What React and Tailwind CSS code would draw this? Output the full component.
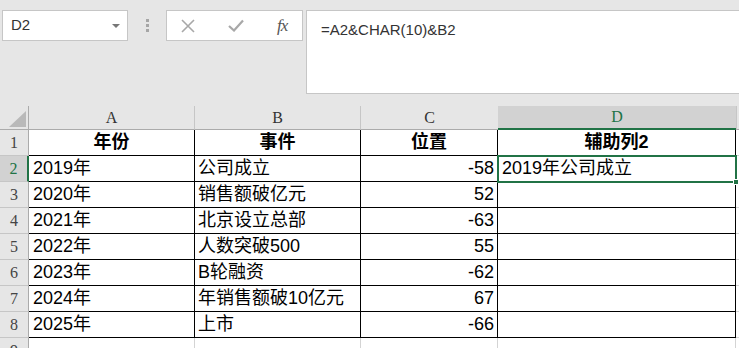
import React from 'react';

const rows = [
  ['2019年', '公司成立', '-58', '2019年公司成立'],
  ['2020年', '销售额破亿元', '52', ''],
  ['2021年', '北京设立总部', '-63', ''],
  ['2022年', '人数突破500', '55', ''],
  ['2023年', 'B轮融资', '-62', ''],
  ['2024年', '年销售额破10亿元', '67', ''],
  ['2025年', '上市', '-66', ''],
];

const cellFont = "font-['Liberation_Sans','Noto_Sans_CJK_SC',sans-serif] text-[18px] text-black";
const headFont = "font-['Liberation_Serif','Noto_Sans_CJK_SC',serif] text-[16px]";

const RowHead = ({ n, active, last }) => (
  <div
    className={`w-[29px] shrink-0 flex items-center justify-center border-b ${headFont} ${
      active
        ? 'bg-[#d2d2d2] text-[#217346] border-r-2 border-r-[#217346] border-b-[#c6c6c6]'
        : 'bg-[#e6e6e6] text-[#444] border-r border-r-[#ababab] border-b-[#c6c6c6]'
    } ${last ? '' : ''}`}
  >
    {n}
  </div>
);

export default function App() {
  return (
    <div className="w-[739px] h-[348px] overflow-hidden bg-[#e6e6e6]">
      {/* formula bar */}
      <div className="flex pt-[10px] h-[96px]">
        <div className="ml-[2px] w-[126px] h-[31px] bg-white border border-[#c6c6c6] flex items-center justify-between pl-[8px] pr-[7px]">
          <span className="font-['Liberation_Sans',sans-serif] text-[15px] text-[#333]">D2</span>
          <svg width="8" height="4" viewBox="0 0 8 4">
            <path d="M0 0H8L4 4Z" fill="#777" />
          </svg>
        </div>
        <div className="w-[38px] h-[31px] flex flex-col items-center justify-center gap-[2px]">
          <div className="w-[3px] h-[3px] bg-[#a6a6a6]" />
          <div className="w-[3px] h-[3px] bg-[#a6a6a6]" />
          <div className="w-[3px] h-[3px] bg-[#a6a6a6]" />
        </div>
        <div className="w-[137px] h-[31px] bg-white border border-[#c6c6c6] flex items-center pl-[14px] gap-[33px]">
          <svg width="14" height="14" viewBox="0 0 14 14">
            <path d="M1 1L13 13M13 1L1 13" stroke="#a8a8a8" strokeWidth="1.6" />
          </svg>
          <svg width="16" height="13" viewBox="0 0 16 13">
            <path d="M1 7L6 11.5L15 1.5" stroke="#a8a8a8" strokeWidth="2.2" fill="none" />
          </svg>
          <span className="font-['Liberation_Serif',serif] italic text-[17px] text-[#555] tracking-[-1px]">fx</span>
        </div>
        <div className="ml-[3px] flex-1 h-[84px] bg-white border border-[#c6c6c6] border-r-0 pl-[14px] pt-[6px]">
          <span className="font-['Liberation_Sans',sans-serif] text-[15px] text-[#333]">=A2&amp;CHAR(10)&amp;B2</span>
        </div>
      </div>

      {/* grid */}
      <div className="relative mt-[10px]">
        <div className={`flex h-[24px] ${headFont} text-[#333]`}>
          <div className="w-[29px] shrink-0 border-r border-[#ababab] border-b border-b-[#ababab] flex items-end justify-end pr-[2px] pb-[2px]">
            <svg width="17" height="16" viewBox="0 0 17 16">
              <path d="M17 0V16H0Z" fill="#b9b9b9" />
            </svg>
          </div>
          <div className="w-[166px] shrink-0 border-r border-[#c6c6c6] border-b border-b-[#ababab] flex items-center justify-center">A</div>
          <div className="w-[166px] shrink-0 border-r border-[#c6c6c6] border-b border-b-[#ababab] flex items-center justify-center">B</div>
          <div className="w-[137px] shrink-0 border-b border-b-[#ababab] flex items-center justify-center">C</div>
          <div className="w-[238px] shrink-0 bg-[#d2d2d2] text-[#217346] border-b-2 border-[#217346] flex items-center justify-center">D</div>
          <div className="flex-1 border-l border-[#c6c6c6] border-b border-b-[#ababab]" />
        </div>

        {/* header row 1 */}
        <div className="flex h-[26px] bg-white">
          <RowHead n="1" />
          <div className={`w-[166px] shrink-0 border-r border-b border-black flex items-center justify-center font-bold ${cellFont}`}>年份</div>
          <div className={`w-[166px] shrink-0 border-r border-b border-black flex items-center justify-center font-bold ${cellFont}`}>事件</div>
          <div className={`w-[137px] shrink-0 border-r border-b border-black flex items-center justify-center font-bold ${cellFont}`}>位置</div>
          <div className={`w-[238px] shrink-0 border-r border-b border-black flex items-center justify-center font-bold ${cellFont}`}>辅助列2</div>
          <div className="flex-1 border-b border-[#d4d4d4]" />
        </div>

        {rows.map((r, i) => (
          <div key={i} className="flex h-[26px] bg-white">
            <RowHead n={i + 2} active={i === 0} />
            <div className={`w-[166px] shrink-0 border-r border-b border-black flex items-center pl-[4px] ${cellFont}`}>{r[0]}</div>
            <div className={`w-[166px] shrink-0 border-r border-b border-black flex items-center pl-[3px] ${cellFont}`}>{r[1]}</div>
            <div className={`w-[137px] shrink-0 border-r border-b border-black flex items-center justify-end pr-[3px] ${cellFont}`}>{r[2]}</div>
            <div className={`w-[238px] shrink-0 border-r border-b border-black flex items-center pl-[4px] ${cellFont}`}>{r[3]}</div>
            <div className="flex-1 border-b border-[#d4d4d4]" />
          </div>
        ))}

        <div className="flex h-[26px] bg-white">
          <RowHead n="9" />
          <div className="w-[166px] shrink-0 border-r border-[#d4d4d4]" />
          <div className="w-[166px] shrink-0 border-r border-[#d4d4d4]" />
          <div className="w-[137px] shrink-0 border-r border-[#d4d4d4]" />
          <div className="w-[238px] shrink-0 border-r border-[#d4d4d4]" />
          <div className="flex-1" />
        </div>

        {/* selection D2 */}
        <div className="absolute left-[497px] top-[49px] w-[240px] h-[28px] border-2 border-[#217346] pointer-events-none">
          <div className="absolute right-[-4px] bottom-[-4px] w-[6px] h-[6px] bg-[#217346] border border-white" />
        </div>
      </div>
    </div>
  );
}
